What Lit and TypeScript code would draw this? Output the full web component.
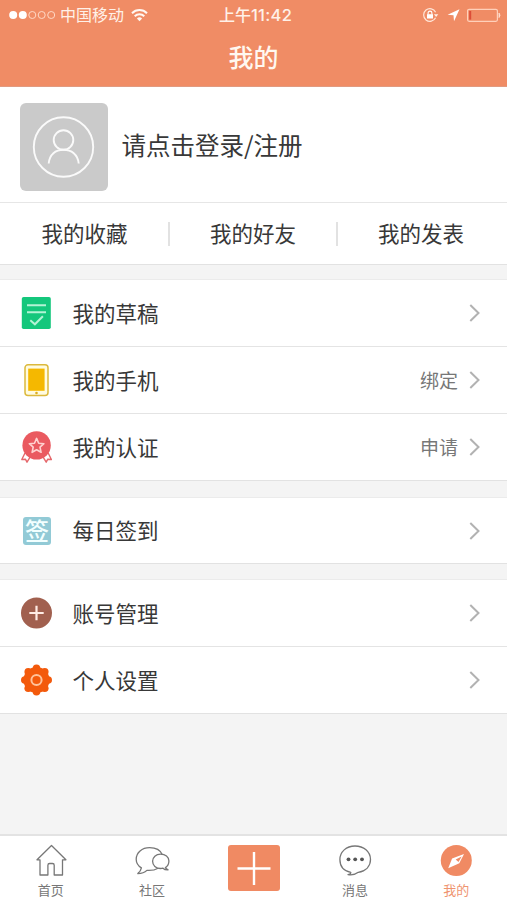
import { LitElement, html, css, svg, nothing } from "lit";
import { customElement, property } from "lit/decorators.js";

const petals = Array.from({ length: 8 }, (_, i) => {
  const a = (i * Math.PI) / 4;
  return svg`<circle cx=${16 + 11.7 * Math.sin(a)} cy=${16 - 11.7 * Math.cos(a)} r="3.8"/>`;
});

const icons = {
  draft: html`<svg width="32" height="34" viewBox="0 0 32 34" fill="none">
    <rect x="1.8" y="1" width="29" height="32" rx="1.8" fill="#14c77c"/>
    <path d="M7 9.2h19M7 16.3h19" stroke="#b4f3d5" stroke-width="2"/>
    <path d="M10.3 24.3l4.6 4 8-8" stroke="#b4f3d5" stroke-width="2"/>
  </svg>`,
  phone: html`<svg width="32" height="34" viewBox="0 0 32 34">
    <rect x="5" y="1.8" width="23" height="30.6" rx="3" fill="#fffbe0" stroke="#dcb93c" stroke-width="1.5"/>
    <rect x="8.2" y="5.6" width="16.4" height="22.2" fill="#f5b800"/>
    <circle cx="16.5" cy="30" r="1.3" fill="#dcae20"/>
  </svg>`,
  medal: html`<svg width="32" height="34" viewBox="0 0 32 34" fill="none" stroke-linejoin="round">
    <path d="M5 23l-3.200 6.500 3.600-.3 1.600 3 4-6.500M28.200 23l3.200 6.500-3.600-.3-1.600 3-4-6.500" fill="#fff" stroke="#e5686c" stroke-width="1.400"/>
    <circle cx="16.600" cy="15.400" r="14.200" fill="#ea5a60"/>
    <path d="M16.600 8.400l2.100 4.800 5.200.5-3.900 3.500 1.100 5.100-4.500-2.600-4.500 2.600 1.100-5.100-3.900-3.500 5.200-.5z" stroke="#ffd2d0" stroke-width="1.600"/>
  </svg>`,
  sign: html`<span class="sign">签</span>`,
  account: html`<svg width="32" height="32" viewBox="0 0 32 32">
    <circle cx="16.500" cy="16" r="15.500" fill="#a1604f"/>
    <path d="M9.300 16h14.400M16.500 8.800v14.400" stroke="#ffece5" stroke-width="2.200"/>
  </svg>`,
  settings: html`<svg width="32" height="32" viewBox="0 0 32 32">
    <g fill="#f35a0c" transform="translate(.5 0)">${petals}<circle cx="16" cy="16" r="13"/></g>
    <circle cx="16.500" cy="16" r="5.100" fill="none" stroke="#ffc39b" stroke-width="2"/>
  </svg>`,
  home: html`<svg width="34" height="34" viewBox="0 0 34 34" fill="none" stroke="#777" stroke-width="1.300" stroke-linejoin="round">
    <path d="M17.500 2.500L3 16.800h3v15.200h7.900v-9.800q0-1.700 1.700-1.700h2.900q1.700 0 1.700 1.700v9.800h8.300V16.800h3.400z"/>
  </svg>`,
  community: html`<svg width="36" height="34" viewBox="0 0 36 34" fill="none" stroke="#777" stroke-width="1.300" stroke-linejoin="round">
    <path d="M28.400 11.800C26.500 7.400 21.700 4.700 15.600 4.700 8 4.700 2.200 9.500 2.200 16.300c0 3.600 1.900 6.600 5.200 8.600-.4 2.200-1.500 4-3.600 5.700 3.700 0 6.900-1 9.100-3.200 4.200.3 8.200-.4 11.200-2.200"/>
    <path d="M31.400 24.600c2.200-1.400 3.500-4 3.500-6.600 0-4.100-3.600-6.800-8.300-6.800s-8 3-8 7.100 3.300 7.200 8 7.200c.9 0 1.600-.1 2.400-.3 1.200 1.300 3 1.800 5.100 1.700-1.300-.6-2.200-1.300-2.700-2.300z"/>
  </svg>`,
  message: html`<svg width="34" height="34" viewBox="0 0 34 34">
    <path d="M17 3C8.300 3 1.900 8.800 1.900 16.500c0 6.700 4.200 11.500 10.900 12.900.1 1.200-.8 1.900-2.800 2.200 4.200.7 7.600-.2 10.300-2.300 7.500-1.300 12.200-6.100 12.200-12.800C32.500 8.800 25.700 3 17 3z" fill="none" stroke="#777" stroke-width="1.300" stroke-linejoin="round"/>
    <g fill="#555"><circle cx="10.500" cy="16.300" r="1.900"/><circle cx="17.200" cy="16.300" r="1.900"/><circle cx="24" cy="16.300" r="1.900"/></g>
  </svg>`,
  mine: html`<svg width="34" height="34" viewBox="0 0 34 34">
    <circle cx="17.300" cy="17.500" r="15.500" fill="#f08a63"/>
    <path d="M9.200 25.300l3.900-9.700L25 11l-4.700 9.300z" fill="#fff"/>
    <path d="M16.700 16.600l6-3.200-3.200 5.600z" fill="#f08a63"/>
  </svg>`,
};

type IconName = keyof typeof icons;

@customElement("status-bar")
class StatusBar extends LitElement {
  static styles = css`
    :host { display: grid; grid-template-columns: 1fr auto 1fr; align-items: center; height: 29px; color: #fff1e8; font-size: 16px; line-height: 28px; }
    .left, .right { display: flex; align-items: center; }
    .left { padding-left: 9px; }
    .dots { margin-right: 4px; }
    .carrier { padding-bottom: 2px; line-height: 24px; }
    .wifi { margin-left: 7px; }
    .time { padding: 0 0 1px 4px; font-family: "Noto Sans CJK SC", sans-serif; font-weight: 500; font-size: 16px; white-space: nowrap; }
    .digits { font-family: Inter, sans-serif; font-size: 16.500px; letter-spacing: .3px; }
    .right { justify-content: flex-end; padding-right: 6px; }
    svg { display: block; }
  `;
  render() {
    return html`
      <div class="left">
        <svg class="dots" width="47" height="12" viewBox="0 0 47 12" fill="none" stroke="#ffd9c6">
          <circle cx="4.200" cy="6" r="4" fill="#fff" stroke="none"/>
          <circle cx="13.800" cy="6" r="4" fill="#fff" stroke="none"/>
          <circle cx="23.300" cy="6" r="3.500"/><circle cx="32.700" cy="6" r="3.500"/><circle cx="42.200" cy="6" r="3.500"/>
        </svg>
        <span class="carrier">中国移动</span>
        <svg class="wifi" width="17" height="14" viewBox="0 0 17 14" fill="none" stroke="#fff8f2" stroke-width="2">
          <path d="M1 5.200a10.600 10.600 0 0 1 15 0M3.700 8.200a6.800 6.800 0 0 1 9.600 0"/>
          <path d="M8.500 13.200L5.900 10.500a3.700 3.700 0 0 1 5.200 0z" fill="#fff8f2" stroke="none"/>
        </svg>
      </div>
      <span class="time">上午<span class="digits">11:42</span></span>
      <div class="right">
        <svg width="80" height="16" viewBox="0 0 80 16" fill="none">
          <path d="M14.600 10.800a6.300 6.300 0 1 1 0-5.600" stroke="#ffe6d8" stroke-width="1.200"/>
          <path d="M12.900 7.300h4.400l-2.200 2.800z" fill="#fff1e8"/>
          <rect x="6" y="7.200" width="6" height="4.300" fill="#fff"/>
          <path d="M7.100 7.500V6a1.900 1.900 0 0 1 3.800 0v1.500" stroke="#fff" stroke-width="1.100"/>
          <path d="M38.500 2.200L26.600 7.800l5.900.4.500 6z" fill="#fff"/>
          <rect x="46.600" y="2.300" width="29.800" height="12" rx="1.500" stroke="#ffd0ba" stroke-width="1.200"/>
          <rect x="48.200" y="4" width="2" height="8.600" fill="#dc4d37"/>
          <path d="M78 6q2 2.300 0 4.600z" fill="#ffe0d0" stroke="#ffe0d0" stroke-width=".8"/>
        </svg>
      </div>`;
  }
}

@customElement("menu-row")
class MenuRow extends LitElement {
  @property() icon: IconName = "draft";
  @property() label = "";
  @property() note = "";
  static styles = css`
    :host { display: flex; align-items: center; box-sizing: border-box; padding: 0 26px 0 20px; color: #383838; }
    .icon { width: 34px; display: flex; align-items: center; }
    .label { flex: 1; margin-left: 18.500px; padding-bottom: 1px; font-size: 21.500px; line-height: 32px; }
    .note { font-size: 19px; line-height: 28px; color: #777; margin-right: 10px; }
    .sign { display: block; width: 28px; height: 28px; margin-left: 3px; border-radius: 3px; background: #92cad6; color: #f2ffff; font-size: 24px; font-weight: 500; line-height: 26px; text-align: center; }
    svg { display: block; }
  `;
  render() {
    return html`
      <span class="icon">${icons[this.icon]}</span>
      <span class="label">${this.label}</span>
      ${this.note ? html`<span class="note">${this.note}</span>` : nothing}
      <svg width="13" height="20" viewBox="0 0 13 20" fill="none" stroke="#b2b2b2" stroke-width="2"><path d="M2.300 2l8.200 8-8.200 8"/></svg>`;
  }
}

@customElement("tab-bar")
class TabBar extends LitElement {
  static styles = css`
    :host { display: grid; grid-template-columns: repeat(5, 1fr); box-sizing: border-box; height: 66px; border-top: 2px solid #e3e3e3; background: #fff; color: #777; }
    .tab { display: flex; flex-direction: column; align-items: center; padding-top: 7px; font-size: 13px; line-height: 18px; }
    .text { margin-top: 4px; }
    .active { color: #ef946f; }
    .add { width: 52px; height: 46px; margin: 2px 0 0 1px; border-radius: 3px; background: #f08a63; }
    svg { display: block; }
  `;
  tab(icon: IconName, text: string, active = false) {
    return html`<div class="tab ${active ? "active" : ""}">${icons[icon]}<span class="text">${text}</span></div>`;
  }
  render() {
    return html`
      ${this.tab("home", "首页")}
      ${this.tab("community", "社区")}
      <div class="tab"><div class="add">
        <svg width="52" height="46" viewBox="0 0 52 46" stroke="#fff" stroke-width="2.400"><path d="M9.500 23.500h33M26 7v33"/></svg>
      </div></div>
      ${this.tab("message", "消息")}
      ${this.tab("mine", "我的", true)}`;
  }
}

@customElement("app-root")
class AppRoot extends LitElement {
  static styles = css`
    :host { display: flex; flex-direction: column; height: 900px; background: #f4f4f4; color: #383838; font-family: "Noto Sans CJK SC", sans-serif; overflow: hidden; }
    .header { height: 87px; box-sizing: border-box; background: #f08c65; border-bottom: 1px solid #e19a80; }
    .title { margin: 0; text-align: center; color: #fff8f0; font-size: 25px; font-weight: 500; line-height: 54px; }
    .profile { display: flex; align-items: center; gap: 13.500px; height: 115px; padding: 0 20px; background: #fff; border-bottom: 1px solid #e6e6e6; font-size: 24.500px; }
    .avatar { width: 88px; height: 88px; margin-top: 4px; border-radius: 6px; background: #cacaca; }
    .avatar svg { display: block; }
    .links { display: grid; grid-template-columns: repeat(3, 168px); align-items: center; height: 61px; background: #fff; border-bottom: 1px solid #e2e2e2; font-size: 21.500px; line-height: 22px; text-align: center; }
    .link { display: flex; align-items: flex-start; justify-content: center; height: 24px; padding-left: 1px; }
    .link + .link { padding-left: 0; border-left: 2px solid #e2e2e2; }
    .group { border-top: 1px solid #ebebeb; border-bottom: 1px solid #e2e2e2; background: #fff; }
    .group.main { margin-top: 14px; }
    .group.daily { margin-top: 16px; }
    .group.account { margin-top: 15px; }
    .row { height: 66px; }
    .row + .row { height: 67px; border-top: 1px solid #e4e4e4; }
    .group.daily .row { height: 65px; }
    tab-bar { margin-top: auto; }
  `;
  render() {
    return html`
      <header class="header"><status-bar></status-bar><h1 class="title">我的</h1></header>
      <section class="profile">
        <div class="avatar">
          <svg width="88" height="88" viewBox="0 0 88 88" fill="none" stroke="#fafafa" stroke-width="1.900">
            <circle cx="43.500" cy="44" r="29.700"/><circle cx="43.500" cy="37" r="9.800"/>
            <path d="M28.700 60.500C29.500 51.500 35.500 46.800 43.500 46.800S57.800 51.500 58.700 60.500"/>
          </svg>
        </div>
        <span>请点击登录/注册</span>
      </section>
      <nav class="links">
        <span class="link">我的收藏</span><span class="link">我的好友</span><span class="link">我的发表</span>
      </nav>
      <section class="group main">
        <menu-row class="row" icon="draft" label="我的草稿"></menu-row>
        <menu-row class="row" icon="phone" label="我的手机" note="绑定"></menu-row>
        <menu-row class="row" icon="medal" label="我的认证" note="申请"></menu-row>
      </section>
      <section class="group daily"><menu-row class="row" icon="sign" label="每日签到"></menu-row></section>
      <section class="group account">
        <menu-row class="row" icon="account" label="账号管理"></menu-row>
        <menu-row class="row" icon="settings" label="个人设置"></menu-row>
      </section>
      <tab-bar></tab-bar>`;
  }
}
